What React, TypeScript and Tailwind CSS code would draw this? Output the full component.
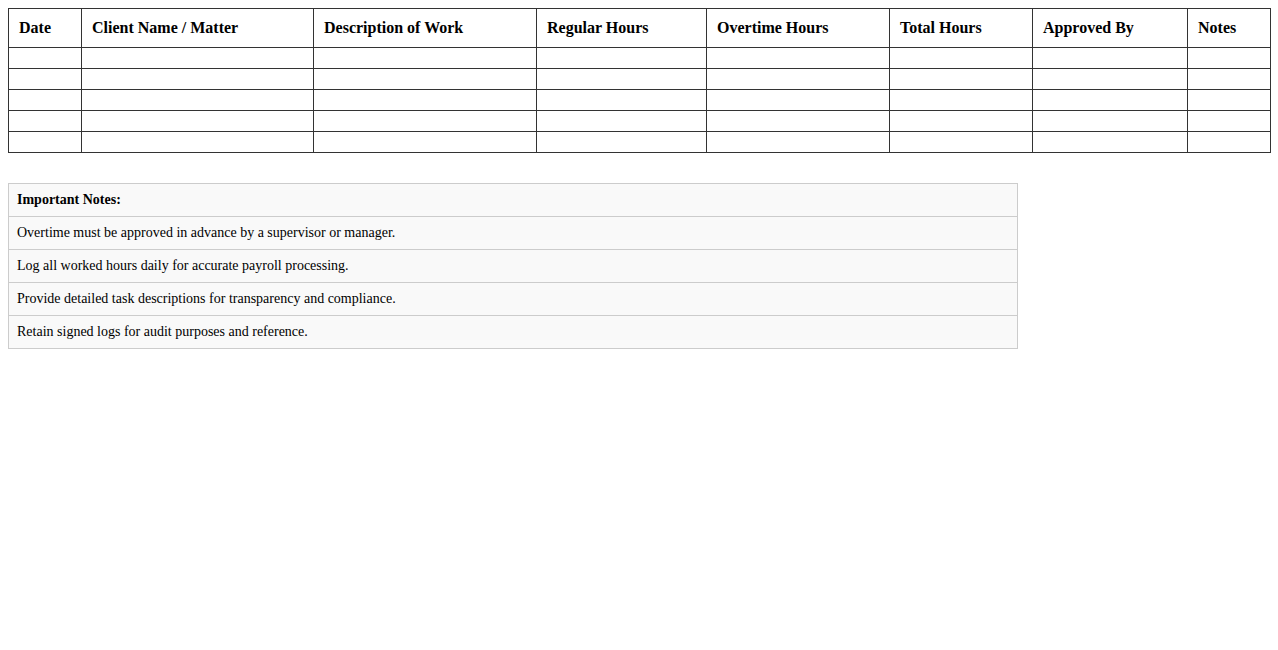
const headers = [
  "Date",
  "Client Name / Matter",
  "Description of Work",
  "Regular Hours",
  "Overtime Hours",
  "Total Hours",
  "Approved By",
  "Notes",
];
const widths = [73, 232, 223, 170, 183, 143, 155, 83];

const notes = [
  "Overtime must be approved in advance by a supervisor or manager.",
  "Log all worked hours daily for accurate payroll processing.",
  "Provide detailed task descriptions for transparency and compliance.",
  "Retain signed logs for audit purposes and reference.",
];

export default function App() {
  return (
    <div className="bg-white min-h-screen p-2 text-black" style={{ fontFamily: '"Liberation Serif", "Times New Roman", serif' }}>
      <table className="w-full border-collapse table-fixed">
        <colgroup>
          {widths.map((w, i) => (
            <col key={i} style={{ width: w }} />
          ))}
        </colgroup>
        <thead>
          <tr>
            {headers.map((h) => (
              <th key={h} className="border border-[#333] p-[10px] text-left text-base font-bold leading-[18px]">
                {h}
              </th>
            ))}
          </tr>
        </thead>
        <tbody>
          {[0, 1, 2, 3, 4].map((r) => (
            <tr key={r}>
              {headers.map((h) => (
                <td key={h} className="border border-[#333] p-[10px]" />
              ))}
            </tr>
          ))}
        </tbody>
      </table>

      <table className="w-4/5 border-collapse mt-[30px]">
        <tbody>
          <tr>
            <td className="border border-[#ccc] bg-[#f9f9f9] p-2 text-sm font-bold leading-4">Important Notes:</td>
          </tr>
          {notes.map((n) => (
            <tr key={n}>
              <td className="border border-[#ccc] bg-[#f9f9f9] p-2 text-sm leading-4">{n}</td>
            </tr>
          ))}
        </tbody>
      </table>
    </div>
  );
}
